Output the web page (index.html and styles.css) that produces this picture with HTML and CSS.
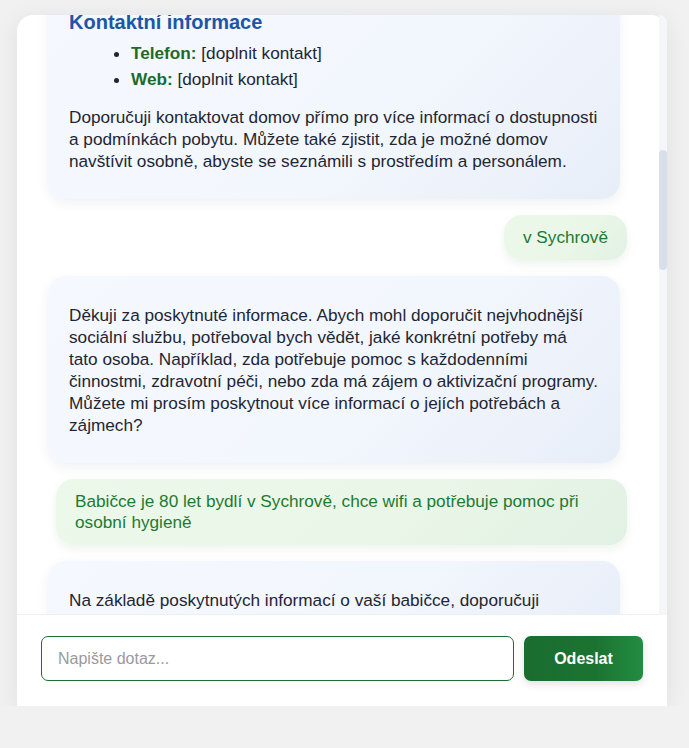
FILE: index.html
```html
<!DOCTYPE html>
<html lang="cs">
<head>
<meta charset="utf-8">
<title>Chat</title>
<link rel="stylesheet" href="styles.css">
</head>
<body>
<div class="chat">
  <div class="messages" id="messages">
    <div class="msg bot">
      <h3 class="msg-title">Kontaktní informace</h3>
      <ul class="contact-list">
        <li><strong>Telefon:</strong> [doplnit kontakt]</li>
        <li><strong>Web:</strong> [doplnit kontakt]</li>
      </ul>
      <p>Doporučuji kontaktovat domov přímo pro více informací o dostupnosti a podmínkách pobytu. Můžete také zjistit, zda je možné domov navštívit osobně, abyste se seznámili s prostředím a personálem.</p>
    </div>
    <div class="msg user">v Sychrově</div>
    <div class="msg bot">
      <p>Děkuji za poskytnuté informace. Abych mohl doporučit nejvhodnější sociální službu, potřeboval bych vědět, jaké konkrétní potřeby má tato osoba. Například, zda potřebuje pomoc s každodenními činnostmi, zdravotní péči, nebo zda má zájem o aktivizační programy. Můžete mi prosím poskytnout více informací o jejích potřebách a zájmech?</p>
    </div>
    <div class="msg user">Babičce je 80 let bydlí v Sychrově, chce wifi a potřebuje pomoc při osobní hygieně</div>
    <div class="msg bot">
      <p>Na základě poskytnutých informací o vaší babičce, doporučuji</p>
    </div>
  </div>
  <div class="scrollbar"><div class="scroll-thumb"></div></div>
  <form class="composer">
    <input class="composer-input" type="text" placeholder="Napište dotaz..." autofocus>
    <button class="composer-send" type="button">Odeslat</button>
  </form>
</div>
<script src="script.js"></script>
</body>
</html>
```
FILE: styles.css
```css
* { box-sizing: border-box; }
html, body { margin: 0; padding: 0; }
body {
  background: #f1f1f1;
  font-family: "Liberation Sans", Arial, sans-serif;
  font-size: 17.2px;
  color: #1f2633;
  padding: 15px 22px 0 17px;
}
.chat {
  position: relative;
  width: 650px;
  height: 691px;
  background: #fff;
  border-radius: 16px 16px 0 0;
  box-shadow: 0 4px 24px rgba(0, 0, 0, 0.08);
  display: flex;
  flex-direction: column;
}
.messages {
  flex: 1;
  overflow: hidden;
  padding: 20px 40px 20px 31px;
  display: flex;
  flex-direction: column;
  gap: 16px;
  border-radius: 16px 16px 0 0;
}
.msg {
  border-radius: 18px;
  line-height: 22px;
  flex-shrink: 0;
}
.msg.bot {
  align-self: flex-start;
  width: 572px;
  padding: 12px 21px;
  background: linear-gradient(135deg, #f5f8ff 0%, #f2f6fd 60%, #e8eef8 100%);
  box-shadow: 0 4px 12px rgba(30, 50, 90, 0.07);
}
.msg.user {
  align-self: flex-end;
  max-width: 571px;
  padding: 12px 19px;
  line-height: 21px;
  color: #1d7a33;
  background: linear-gradient(135deg, #ecf8ea 0%, #eaf6e7 60%, #e1f1e4 100%);
  box-shadow: 0 4px 10px rgba(40, 110, 50, 0.08);
}
.msg p { margin: 16px 0 15px; }
.msg-title {
  margin: 8px 0 8px;
  font-size: 20px;
  line-height: 24px;
  color: #1c56a6;
  font-weight: bold;
}
.contact-list {
  margin: 0;
  padding-left: 62px;
}
.contact-list li { margin: 0 0 4px; }
.contact-list strong { color: #1c6b2b; }
.scrollbar {
  position: absolute;
  top: 0;
  right: 0;
  width: 8px;
  height: 600px;
  background: #f4f6fa;
  border-radius: 0 16px 0 0;
}
.scroll-thumb {
  position: absolute;
  top: 135px;
  left: 0;
  width: 8px;
  height: 120px;
  border-radius: 4px;
  background: #d7e0ea;
}
.composer {
  display: flex;
  gap: 10px;
  padding: 21px 24px 25px;
  border-top: 1px solid #eceef1;
  background: #fff;
  margin: 0;
}
.composer-input {
  flex: 1;
  height: 45px;
  border: 1px solid #1e6e33;
  border-radius: 7px;
  padding: 0 16px;
  font-family: "Liberation Sans", Arial, sans-serif;
  font-size: 16px;
  color: #1f2633;
  caret-color: #1a5ee8;
  outline: none;
}
.composer-input::placeholder { color: #9a9a9a; }
.composer-send {
  width: 119px;
  height: 45px;
  border: none;
  border-radius: 7px;
  background: linear-gradient(90deg, #1a6d2f 0%, #1b7331 60%, #238c41 100%);
  color: #fff;
  font-family: "Liberation Sans", Arial, sans-serif;
  font-size: 16px;
  font-weight: bold;
  box-shadow: 0 3px 8px rgba(0, 0, 0, 0.12);
}
```
FILE: script.js
```js
document.getElementById('messages').scrollTop = 45;
```
